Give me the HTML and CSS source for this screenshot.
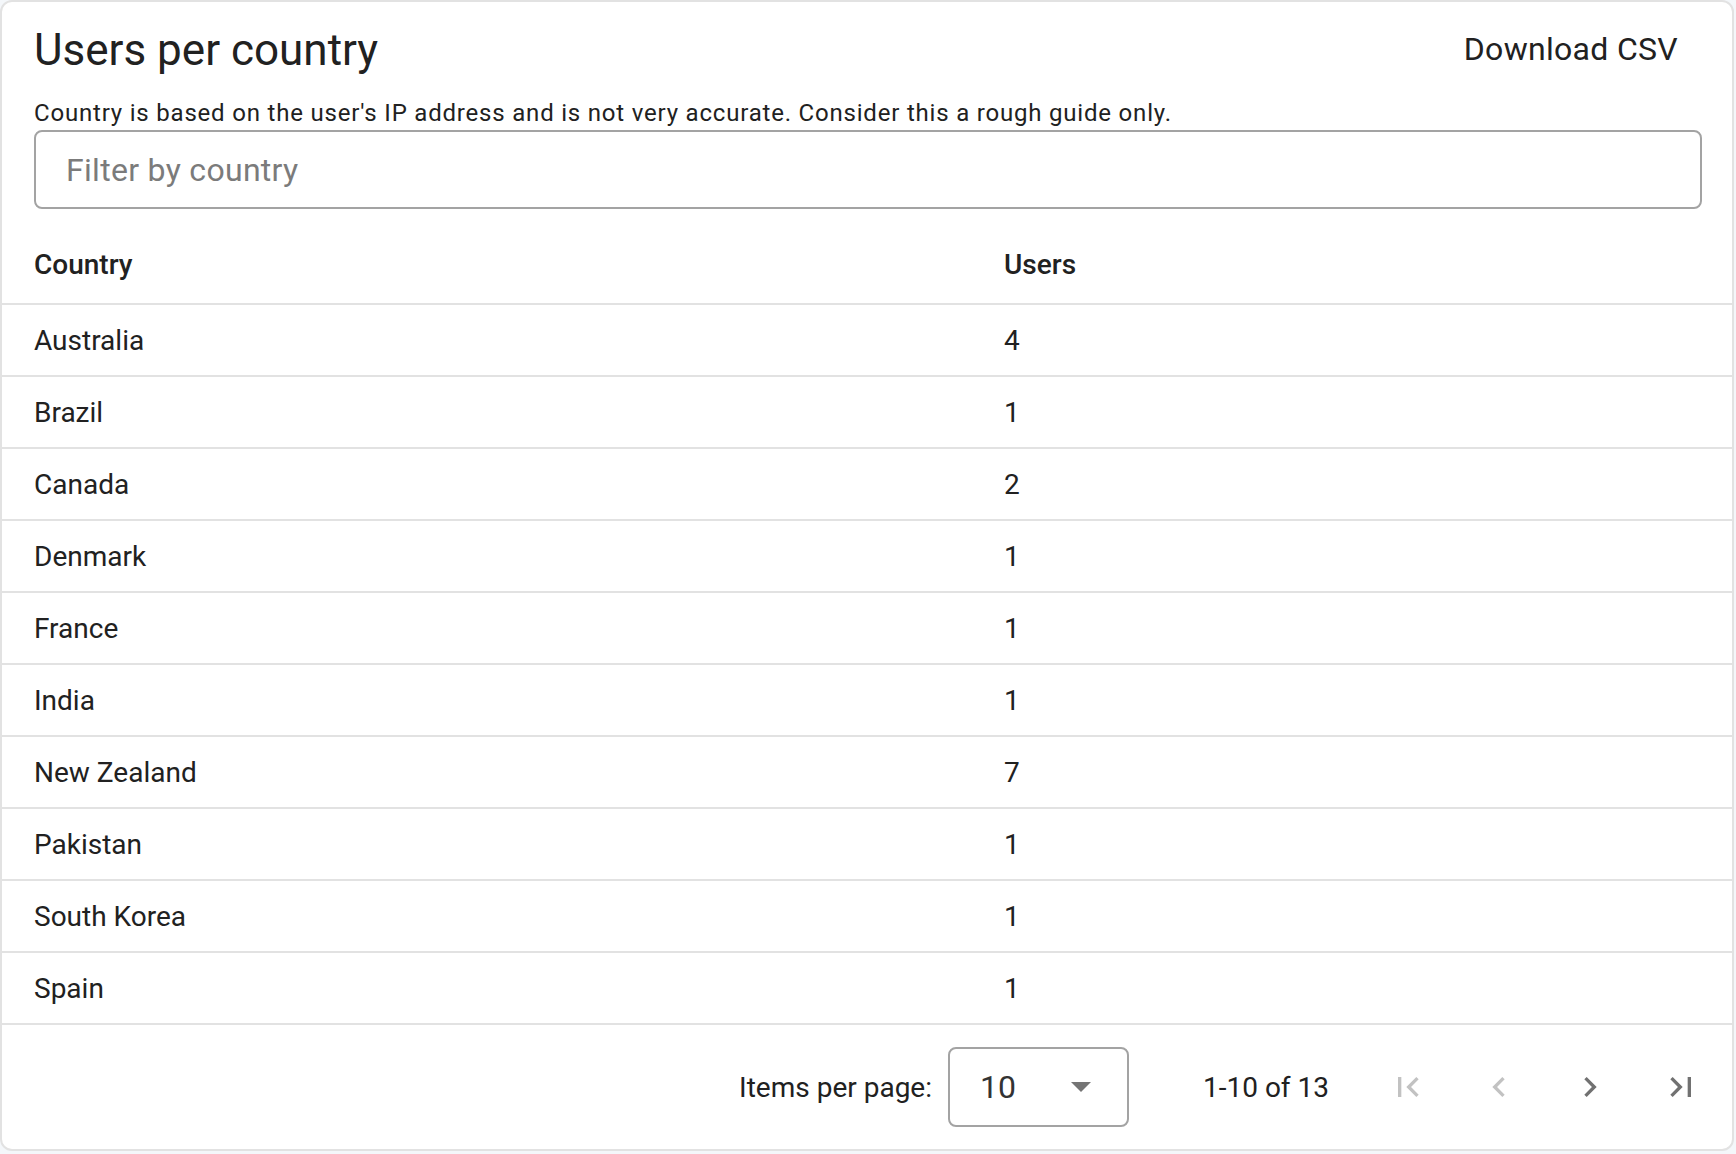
FILE: index.html
```html
<!DOCTYPE html>
<html lang="en">
<head>
<meta charset="utf-8">
<title>Users per country</title>
<link rel="stylesheet" href="styles.css">
</head>
<body>
<div class="card">
  <div class="top">
    <div class="title-row">
      <h1 class="title">Users per country</h1>
      <button class="text-btn" type="button">Download CSV</button>
    </div>
    <p class="subtitle">Country is based on the user's IP address and is not very accurate. Consider this a rough guide only.</p>
    <div class="field">
      <input class="filter" type="text" placeholder="Filter by country">
    </div>
  </div>
  <div class="table">
    <div class="row head"><div class="c1">Country</div><div class="c2">Users</div></div>
    <div class="row"><div class="c1">Australia</div><div class="c2">4</div></div>
    <div class="row"><div class="c1">Brazil</div><div class="c2">1</div></div>
    <div class="row"><div class="c1">Canada</div><div class="c2">2</div></div>
    <div class="row"><div class="c1">Denmark</div><div class="c2">1</div></div>
    <div class="row"><div class="c1">France</div><div class="c2">1</div></div>
    <div class="row"><div class="c1">India</div><div class="c2">1</div></div>
    <div class="row"><div class="c1">New Zealand</div><div class="c2">7</div></div>
    <div class="row"><div class="c1">Pakistan</div><div class="c2">1</div></div>
    <div class="row"><div class="c1">South Korea</div><div class="c2">1</div></div>
    <div class="row"><div class="c1">Spain</div><div class="c2">1</div></div>
  </div>
  <div class="paginator">
    <span class="pg-label">Items per page:</span>
    <div class="select">
      <span class="select-value">10</span>
      <span class="select-arrow"></span>
    </div>
    <span class="range">1-10 of 13</span>
    <button class="icon-btn disabled" type="button" aria-label="First page">
      <svg viewBox="0 0 24 24" class="icon"><path d="M18.41 16.59L13.82 12l4.59-4.59L17 6l-6 6 6 6zM6 6h2v12H6z"/></svg>
    </button>
    <button class="icon-btn disabled" type="button" aria-label="Previous page">
      <svg viewBox="0 0 24 24" class="icon"><path d="M15.41 7.41L14 6l-6 6 6 6 1.41-1.41L10.83 12z"/></svg>
    </button>
    <button class="icon-btn" type="button" aria-label="Next page">
      <svg viewBox="0 0 24 24" class="icon"><path d="M10 6L8.59 7.41 13.17 12l-4.58 4.59L10 18l6-6z"/></svg>
    </button>
    <button class="icon-btn" type="button" aria-label="Last page">
      <svg viewBox="0 0 24 24" class="icon"><path d="M5.59 7.41L10.18 12l-4.59 4.59L7 18l6-6-6-6zM16 6h2v12h-2z"/></svg>
    </button>
  </div>
</div>
</body>
</html>
```
FILE: styles.css
```css
* { box-sizing: border-box; }
html, body {
  margin: 0;
  padding: 0;
  background: #f4f7fa;
}
body {
  font-family: Roboto, "Liberation Sans", sans-serif;
  color: #212121;
}
.card {
  width: 1734px;
  height: 1151px;
  background: #ffffff;
  border: 2px solid #e2e2e2;
  border-radius: 12px;
  overflow: hidden;
  display: flex;
  flex-direction: column;
}
.top {
  padding: 13px 30px 0 32px;
}
.title-row {
  height: 70px;
  display: flex;
  align-items: center;
  justify-content: space-between;
}
.title {
  margin: 0;
  font-size: 44px;
  font-weight: 400;
  line-height: 70px;
  color: #212121;
}
.text-btn {
  border: none;
  background: transparent;
  font-family: inherit;
  font-size: 32px;
  letter-spacing: 0.3px;
  color: #212121;
  padding: 0 24px 0 16px;
  height: 70px;
  margin-top: -2px;
  cursor: pointer;
}
.subtitle {
  margin: 12px 0 0 0;
  font-size: 24px;
  line-height: 32px;
  letter-spacing: 0.8px;
  color: #212121;
}
.field {
  margin: 1px 0 14px 0;
}
.filter {
  display: block;
  width: 100%;
  height: 79px;
  border: 2px solid #a3a3a3;
  border-radius: 8px;
  padding: 0 0 0 30px;
  font-family: inherit;
  font-size: 32px;
  letter-spacing: 0.3px;
  color: #212121;
  outline: none;
}
.filter::placeholder {
  color: #7b7b7b;
}
.table {
  display: flex;
  flex-direction: column;
}
.row {
  display: grid;
  grid-template-columns: 1002px 1fr;
  align-items: center;
  height: 72px;
  border-bottom: 2px solid #e2e2e2;
  font-size: 28px;
}
.row.head {
  height: 82px;
  font-weight: 500;
  padding-top: 2px;
}
.c1 { padding-left: 32px; }
.paginator {
  flex: 1;
  display: flex;
  align-items: center;
  justify-content: flex-end;
  padding-right: 6px;
  font-size: 28px;
  color: #212121;
}
.pg-label {
  margin-right: 16px;
}
.select {
  width: 181px;
  height: 80px;
  border: 2px solid #a3a3a3;
  border-radius: 8px;
  display: flex;
  align-items: center;
  padding-left: 30px;
}
.select-value {
  font-size: 32px;
  color: #333333;
  flex: 1;
}
.select-arrow {
  width: 0;
  height: 0;
  border-left: 10px solid transparent;
  border-right: 10px solid transparent;
  border-top: 10px solid #757575;
  margin-right: 36px;
}
.range {
  margin-left: 74px;
  margin-right: 33px;
}
.icon-btn {
  width: 91px;
  height: 80px;
  border: none;
  background: transparent;
  padding: 0;
  display: flex;
  align-items: center;
  justify-content: center;
  cursor: pointer;
}
.icon {
  width: 40px;
  height: 40px;
  fill: #717171;
}
.icon-btn.disabled .icon {
  fill: #c2c2c2;
}
```
